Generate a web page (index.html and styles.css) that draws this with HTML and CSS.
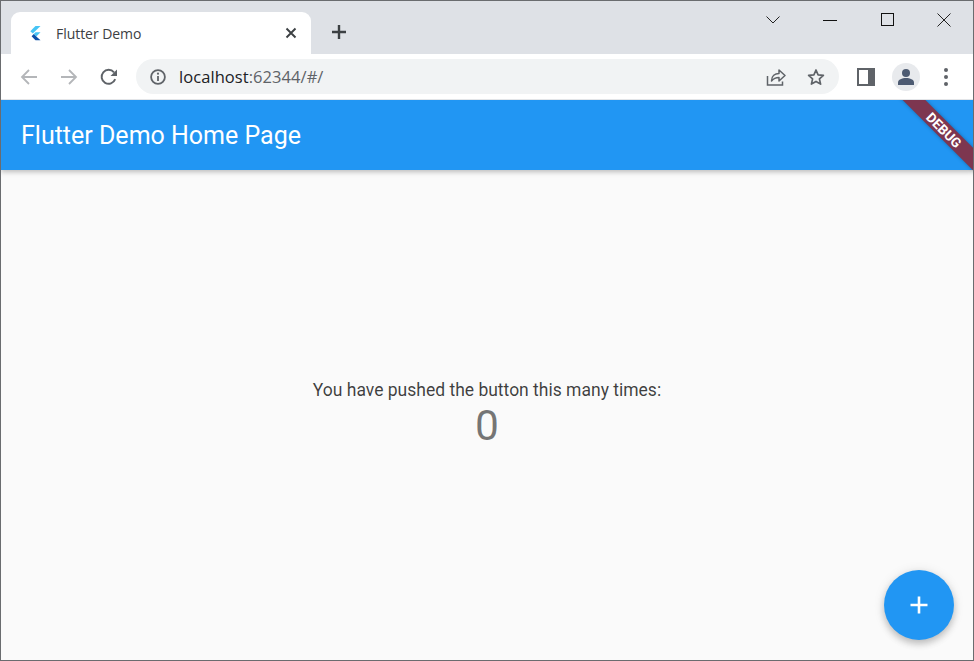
FILE: index.html
```html
<!DOCTYPE html>
<html lang="en">
<head>
<meta charset="utf-8">
<title>Flutter Demo</title>
<link rel="stylesheet" href="styles.css">
</head>
<body>
<div class="window">
  <header class="tabstrip">
    <div class="tab">
      <svg class="favicon" width="16" height="16" viewBox="0 0 16 16"><path d="M8.500 1h5L5.800 8.600 3.300 6.200z" fill="#45c4f5"/><path d="M8.500 7.200h5L9.300 11.400 6.800 9z" fill="#45c4f5"/><path d="M6.800 9l2.500 2.400 4.200 3.800H8.500L6.500 13.200 4.600 11.300z" fill="#0b4fa8"/></svg>
      <span class="tab-title">Flutter Demo</span>
      <svg class="tab-close" width="12" height="12" viewBox="0 0 12 12"><path d="M1.500 1.500l9 9M10.500 1.500l-9 9" stroke="#3c4043" stroke-width="1.900" fill="none"/></svg>
    </div>
    <svg class="new-tab" width="16" height="16" viewBox="0 0 16 16"><path d="M8 1v14M1 8h14" stroke="#3c4043" stroke-width="2.400" fill="none"/></svg>
    <div class="win-controls">
      <svg class="win-btn" width="14" height="14" viewBox="0 0 14 14"><path d="M.5 3.500L7 10l6.500-6.500" stroke="#222" stroke-width="1" fill="none"/></svg>
      <svg class="win-btn" width="14" height="14" viewBox="0 0 14 14"><path d="M0 7.500h14" stroke="#111" stroke-width="1" fill="none"/></svg>
      <svg class="win-btn" width="14" height="14" viewBox="0 0 14 14"><rect x="1.500" y=".5" width="12" height="12" stroke="#111" stroke-width="1" fill="none"/></svg>
      <svg class="win-btn" width="14" height="14" viewBox="0 0 14 14"><path d="M.5.500l13 13M13.500.500l-13 13" stroke="#222" stroke-width="1" fill="none"/></svg>
    </div>
  </header>
  <nav class="toolbar">
    <svg class="nav-icon" width="18" height="18" viewBox="0 0 18 18"><path d="M17 9H2M9 2L2 9l7 7" stroke="#b4b6b9" stroke-width="1.800" fill="none"/></svg>
    <svg class="nav-icon" width="18" height="18" viewBox="0 0 18 18"><path d="M1 9h15M9 2l7 7-7 7" stroke="#b4b6b9" stroke-width="1.800" fill="none"/></svg>
    <svg class="nav-icon" width="18" height="18" viewBox="0 0 18 18"><path d="M15.200 11.200A7 7 0 1 1 14 4.300" stroke="#5f6368" stroke-width="1.900" fill="none"/><path d="M17 1.500V8h-6.500z" fill="#5f6368"/></svg>
    <div class="omnibox">
      <svg class="info" width="18" height="18" viewBox="0 0 18 18"><circle cx="9" cy="9" r="6.900" stroke="#5f6368" stroke-width="1.800" fill="none"/><path d="M9 8v5" stroke="#5f6368" stroke-width="1.800"/><circle cx="9" cy="5.700" r="1.100" fill="#5f6368"/></svg>
      <span class="url"><span class="host">localhost</span>:62344/#/</span>
      <svg class="omni-icon" width="20" height="18" viewBox="0 0 20 18"><path d="M1.500 8v9h15v-3.500" stroke="#5f6368" stroke-width="1.500" fill="none"/><path d="M5.500 13c0-5 3.500-7.500 7.500-7.500V2l6 5.500-6 5.500V9.500c-3 0-5.500 1-7.500 3.500z" stroke="#5f6368" stroke-width="1.500" fill="none" stroke-linejoin="round"/></svg>
      <svg class="omni-icon star" width="18" height="18" viewBox="0 0 18 18"><path d="M9 2l2.100 4.900 5.300.5-4 3.500 1.200 5.200L9 13.400l-4.600 2.700 1.200-5.200-4-3.500 5.300-.5z" stroke="#5f6368" stroke-width="1.700" fill="none" stroke-linejoin="round"/></svg>
    </div>
    <div class="side-panel"><span class="side-panel-inner"></span></div>
    <div class="avatar">
      <svg width="18" height="18" viewBox="0 0 18 18"><circle cx="9" cy="5" r="4" fill="#4d5b72"/><path d="M1 17v-2.500c0-3 4-4.500 8-4.500s8 1.500 8 4.500V17z" fill="#4d5b72"/></svg>
    </div>
    <div class="kebab"><span></span><span></span><span></span></div>
  </nav>
  <div class="app">
    <div class="appbar"><h1 class="app-title">Flutter Demo Home Page</h1></div>
    <main class="content">
      <p class="label">You have pushed the button this many times:</p>
      <p class="count">0</p>
    </main>
    <button class="fab" type="button" aria-label="Increment">
      <svg width="20" height="20" viewBox="0 0 20 20"><path d="M10 1.500v17M1.500 10h17" stroke="#fff" stroke-width="2.600" fill="none"/></svg>
    </button>
    <div class="banner-clip"><div class="banner">DEBUG</div></div>
  </div>
</div>
</body>
</html>
```

FILE: styles.css
```css
* { box-sizing: border-box; }
html, body { margin: 0; padding: 0; }
body { width: 974px; height: 661px; overflow: hidden; font-family: "Open Sans", sans-serif; }
.window {
  width: 974px; height: 661px; display: flex; flex-direction: column;
  border: 1px solid #6a6c6f; background: #fff;
}
.tabstrip { height: 53px; flex: none; background: #dee1e6; display: flex; align-items: flex-start; padding: 11px 0 0 10px; }
.tab {
  width: 300px; height: 42px; background: #fff; border-radius: 9px 9px 0 0;
  display: flex; align-items: center; padding: 0 14px 0 16px;
}
.favicon { flex: none; }
.tab-title { margin-left: 13px; flex: 1; font-size: 14px; color: #3c4043; letter-spacing: -.05px; }
.tab-close { flex: none; }
.new-tab { margin: 12px 0 0 20px; flex: none; }
.win-controls { margin-left: auto; display: flex; align-items: center; height: 16px; padding-right: 22px; gap: 43px; }
.win-btn { flex: none; }
.toolbar { height: 46px; flex: none; background: #fff; display: flex; align-items: center; padding: 0 0 0 19px; border-bottom: 1px solid #e3e5e8; }
.nav-icon { flex: none; margin-right: 22px; }
.nav-icon:nth-child(3) { margin-right: 18px; }
.omnibox { width: 703px; height: 35px; flex: none; border-radius: 18px; background: #f1f3f4; display: flex; align-items: center; padding: 0 14px 0 13px; }
.info { flex: none; }
.url { margin-left: 12px; flex: 1; font-size: 16.5px; color: #5f6368; letter-spacing: .06px; }
.host { color: #202124; }
.omni-icon { flex: none; }
.star { margin-left: 21px; }
.side-panel { margin-left: 18px; width: 18px; height: 18px; flex: none; background: #5f6368; padding: 2px 7px 2px 2px; }
.side-panel-inner { display: block; width: 9px; height: 14px; background: #fff; }
.avatar { margin-left: 17px; width: 28px; height: 28px; flex: none; border-radius: 50%; background: #e8eaed; display: flex; align-items: center; justify-content: center; }
.kebab { margin-left: 24px; display: flex; flex-direction: column; gap: 3px; flex: none; }
.kebab span { width: 4px; height: 4px; border-radius: 50%; background: #5f6368; }
.app { position: relative; flex: 1; display: flex; flex-direction: column; background: #fafafa; overflow: hidden; font-family: Roboto, sans-serif; }
.appbar { height: 70px; flex: none; background: #2196f3; display: flex; align-items: center; padding: 0 20px; box-shadow: 0 2px 5px rgba(0,0,0,.25); z-index: 1; }
.app-title { margin: 0; font-size: 25px; font-weight: 400; color: #fff; }
.content { flex: 1; display: flex; flex-direction: column; align-items: center; justify-content: center; }
.label { margin: 0; font-size: 17.5px; line-height: 21px; color: rgba(0,0,0,.76); }
.count { margin: 0; font-size: 42.5px; line-height: 50px; color: rgba(0,0,0,.54); }
.fab {
  position: absolute; right: 19px; bottom: 20px; width: 70px; height: 70px; border: 0; padding: 0;
  border-radius: 50%; background: #2196f3; display: flex; align-items: center; justify-content: center;
  box-shadow: 0 4px 7px rgba(0,0,0,.2), 0 1px 12px rgba(0,0,0,.1);
}
.banner-clip { position: absolute; top: 0; right: 0; width: 110px; height: 110px; overflow: hidden; z-index: 2; pointer-events: none; }
.banner {
  position: absolute; top: 21px; right: -45px; width: 150px; height: 16px; line-height: 16px;
  padding-left: 3px; transform: rotate(45deg); background: #7d3650; color: #fff;
  text-align: center; font-size: 13.5px; font-weight: 700; box-shadow: 0 0 4px rgba(0,0,0,.3);
}
```
